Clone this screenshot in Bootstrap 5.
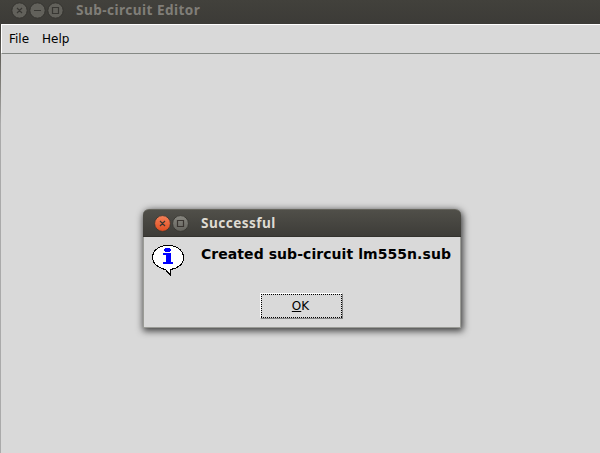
<!DOCTYPE html>
<html lang="en">
<head>
<meta charset="utf-8">
<title>Sub-circuit Editor</title>
<link href="https://cdn.jsdelivr.net/npm/bootstrap@5.3.0/dist/css/bootstrap.min.css" rel="stylesheet">
<style>
body{width:600px;height:453px;background:#d9d9d9;color:#000;font:12px/16px "DejaVu Sans",sans-serif}
.titlebar{height:24px;background:linear-gradient(#42413c,#3c3b37);font:bold 13.6px/20px "Noto Sans",sans-serif;letter-spacing:.45px;color:#807e78;padding-left:11px}
.wm-buttons{width:65px;flex:none}
.wm-buttons svg{display:block}
.main-area{padding-left:1px;background:linear-gradient(#3c3b37,#77756f 50px,#aaa 100px) 0 0/1px 100% no-repeat}
.menu-strip{height:30px;border-top:1px solid #fff;border-left:1px solid #fff;border-bottom:1px solid #858985;background:#d9d9d9;padding:6px 0 0 7px;gap:13px}
.dialog-window{left:143px;top:209px;width:318px;height:119px;border:solid #9a9b96;border-width:0 1px 1px;border-radius:7px 7px 0 0;background:#d9d9d9;box-shadow:1px 2px 7px 1px rgba(0,0,0,.72)}
.dialog-title{height:28px;margin:0 -1px;border-radius:6px 6px 0 0;background:linear-gradient(#504f49,#3d3c38);border-top:1px solid #65645c;border-bottom:1px solid #33322e;color:#dfdbd2;font:bold 13.6px/25px "Noto Sans",sans-serif;letter-spacing:.45px;padding-left:11px}
.dialog-title .wm-buttons{width:47px}
.dialog-body{margin-left:-1px}
.message{font-weight:bold;font-size:14px;letter-spacing:.06px;line-height:18px;padding:8px 0 0 16px}
.ok-button{width:83px;height:26px;margin:15px 0 0 116px;border:1px solid;border-color:#fff #858585 #858585 #fff;border-radius:0;background:#d9d9d9;padding:0 2px 0 0;font-size:12px;line-height:22px;color:#000;position:relative}
.ok-button svg{position:absolute;left:0;top:0}
</style>
</head>
<body class="overflow-hidden position-relative">
<div class="vh-100 d-flex flex-column">
  <header class="titlebar d-flex">
    <div class="wm-buttons"><svg width="54" height="21" viewBox="0 0 54 21">
      <g fill="#62615b" stroke="#34332f"><circle cx="8.5" cy="10.5" r="7.7"/><circle cx="26.5" cy="10.5" r="7.7"/><circle cx="44.5" cy="10.5" r="7.7"/></g>
      <g fill="none" stroke="#383733" stroke-width="1.2"><path d="M6 8l5 5M11 8l-5 5M23 10.5h7M41.5 7.5h6v6h-6z"/></g></svg></div>
    <div>Sub-circuit Editor</div>
  </header>
  <main class="main-area flex-grow-1">
    <nav class="menu-strip d-flex"><span>File</span><span>Help</span></nav>
  </main>
</div>
<section class="dialog-window position-absolute" role="dialog">
  <div class="dialog-title d-flex">
    <div class="wm-buttons"><svg width="36" height="27" viewBox="0 0 36 27">
      <defs><linearGradient id="close" x2="0" y2="1"><stop stop-color="#f58159"/><stop offset="1" stop-color="#df4d20"/></linearGradient><linearGradient id="maxi" x2="0" y2="1"><stop stop-color="#888780"/><stop offset="1" stop-color="#64635d"/></linearGradient></defs>
      <circle cx="8.5" cy="13.5" r="7.9" fill="url(#close)" stroke="#35342f" stroke-width=".8"/><circle cx="26.5" cy="13.5" r="7.9" fill="url(#maxi)" stroke="#35342f" stroke-width=".8"/>
      <path d="M6 11l5 5M11 11l-5 5M23.5 10.5h6v6h-6z" fill="none" stroke="#3a3531" stroke-width="1.2"/></svg></div>
    <div>Successful</div>
  </div>
  <div class="dialog-body d-flex">
    <svg class="flex-shrink-0 mt-2 ms-2" width="34" height="33" viewBox="0 0 34 33" shape-rendering="crispEdges">
      <path d="M17 .5C8 .5 1.500 5.500 1.500 12.500c0 5.500 4.500 9.500 11 11.500 2 .5 3 1 4 3l3 3v-5.500c7.500-.8 13-5.500 13-12C32.500 5.500 26 .5 17 .5z" fill="#fff" stroke="#000"/>
      <path d="M14 3h5v1h1v2h-1v1h-5V6h-1V4h1zM12 8h8v9h2v2h-10v-2h3v-7h-3z" fill="#00f"/></svg>
    <div class="message text-nowrap">Created sub-circuit lm555n.sub</div>
  </div>
  <button class="btn ok-button d-block"><svg width="81" height="24"><path d="M0 .5h81M0 23.500h81M.5 0v24M80.500 0v24" stroke="#000" stroke-dasharray="1 1" shape-rendering="crispEdges"/></svg><u>O</u>K</button>
</section>
<script src="https://cdn.jsdelivr.net/npm/bootstrap@5.3.0/dist/js/bootstrap.bundle.min.js"></script>
</body>
</html>
